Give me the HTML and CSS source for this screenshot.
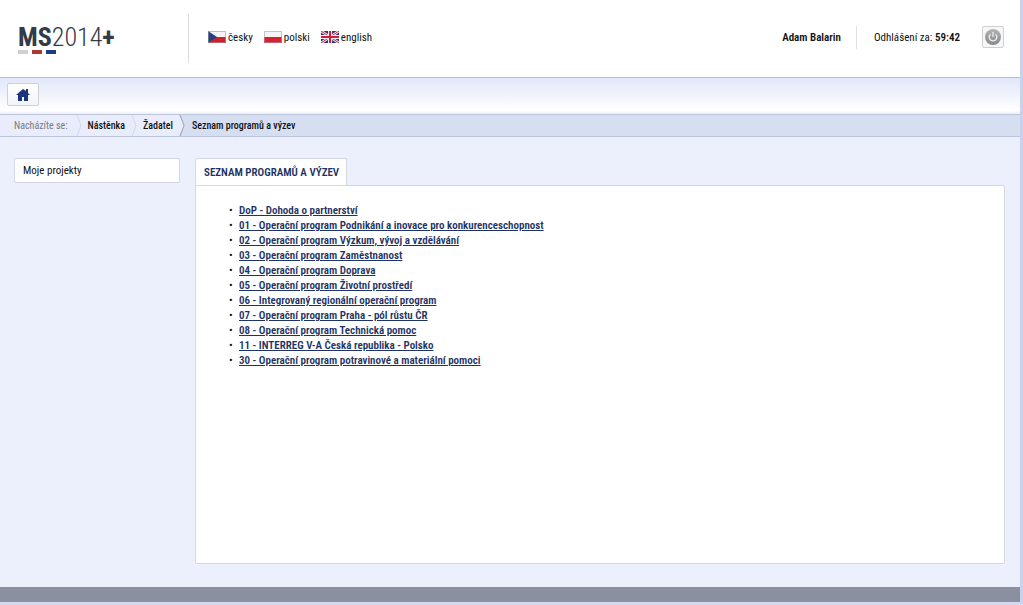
FILE: index.html
```html
<!DOCTYPE html>
<html lang="cs">
<head>
<meta charset="utf-8">
<title>MS2014+</title>
<link rel="stylesheet" href="styles.css">
</head>
<body>
<div class="page">
  <header class="header">
    <div class="brand">
      <div class="logo"><b>MS</b>2014<b>+</b></div>
      <div class="stripes"><span class="stripe"></span><span class="stripe stripe-red"></span><span class="stripe stripe-blue"></span></div>
    </div>
    <nav class="languages">
      <a class="language" href="#cs"><svg class="flag" viewBox="0 0 18 12"><path fill="#f4f4f6" d="M0 0h18v6H0z"/><path fill="#d0202c" d="M0 6h18v6H0z"/><path fill="#24427f" d="M0 0l9 6-9 6z"/><path fill="none" stroke="#9a9aa5" stroke-opacity=".6" d="M.5.5h17v11H.5z"/></svg>česky</a>
      <a class="language" href="#pl"><svg class="flag" viewBox="0 0 18 12"><path fill="#f4f4f6" d="M0 0h18v6H0z"/><path fill="#d9202f" d="M0 6h18v6H0z"/><path fill="none" stroke="#b09aa5" stroke-opacity=".6" d="M.5.5h17v11H.5z"/></svg>polski</a>
      <a class="language" href="#en"><svg class="flag" viewBox="0 0 18 12"><path fill="#283a80" d="M0 0h18v12H0z"/><path stroke="#f2eef4" stroke-width="2.6" d="M0 0l18 12M18 0L0 12"/><path stroke="#cc2740" d="M0 0l18 12M18 0L0 12"/><path stroke="#f2eef4" stroke-width="4" d="M9 0v12M0 6h18"/><path stroke="#cc2036" stroke-width="2" d="M9 0v12M0 6h18"/></svg>english</a>
    </nav>
    <div class="session">
      <b class="user">Adam Balarin</b>
      <span class="timer">Odhlášení za: <b>59:42</b></span>
      <button class="power" type="button" aria-label="Odhlásit"><svg width="18" height="18" viewBox="0 0 18 18"><defs><linearGradient id="knob" x2="0" y2="1"><stop stop-color="#b4b4b4"/><stop offset="1" stop-color="#85888b"/></linearGradient></defs><circle cx="9" cy="9" r="8" fill="url(#knob)"/><path d="M6.5 6.2a3.8 3.8 0 1 0 5 0M9 4v5" fill="none" stroke="#eee" stroke-width="1.3"/></svg></button>
    </div>
  </header>
  <div class="toolbar">
    <a class="home" href="#home" aria-label="Nástěnka"><svg width="14" height="14" viewBox="0 0 14 14"><path fill="#1c3478" d="M7 1L0 7h2v6h4V9h2v4h4V7h2l-2-2V1h-2v2z"/></svg></a>
  </div>
  <nav class="crumbs">
    <span class="crumb crumb-label">Nacházíte se:</span>
    <svg class="chevron" viewBox="0 0 6 21"><path d="M1 0l4 10.500-4 10.500" fill="none" stroke="#d3d8ea"/></svg>
    <a class="crumb" href="#board">Nástěnka</a>
    <svg class="chevron" viewBox="0 0 6 21"><path d="M1 0l4 10.500-4 10.500" fill="none" stroke="#d3d8ea"/></svg>
    <a class="crumb" href="#applicant">Žadatel</a>
    <svg class="chevron chevron-last" viewBox="0 0 6 21"><path d="M0 0h1l4 10.500-4 10.500H0z" fill="#e9edfb"/><path d="M1 0l4 10.500-4 10.500" fill="none" stroke="#959fb6"/></svg>
    <span class="crumb crumb-current">Seznam programů a výzev</span>
  </nav>
  <main class="main">
    <aside class="side"><a class="side-link" href="#projects">Moje projekty</a></aside>
    <section class="content">
      <h1 class="tab">SEZNAM PROGRAMŮ A VÝZEV</h1>
      <div class="panel">
        <ul class="programs">
          <li><a href="#dop">DoP - Dohoda o partnerství</a></li>
          <li><a href="#01">01 - Operační program Podnikání a inovace pro konkurenceschopnost</a></li>
          <li><a href="#02">02 - Operační program Výzkum, vývoj a vzdělávání</a></li>
          <li><a href="#03">03 - Operační program Zaměstnanost</a></li>
          <li><a href="#04">04 - Operační program Doprava</a></li>
          <li><a href="#05">05 - Operační program Životní prostředí</a></li>
          <li><a href="#06">06 - Integrovaný regionální operační program</a></li>
          <li><a href="#07">07 - Operační program Praha - pól růstu ČR</a></li>
          <li><a href="#08">08 - Operační program Technická pomoc</a></li>
          <li><a href="#11">11 - INTERREG V-A Česká republika - Polsko</a></li>
          <li><a href="#30">30 - Operační program potravinové a materiální pomoci</a></li>
        </ul>
      </div>
    </section>
  </main>
  <footer class="footer"></footer>
</div>
</body>
</html>
```
FILE: styles.css
```css
* { box-sizing: border-box; }
body {
  margin: 0;
  background: #c9d2ea;
  color: #111;
  font: 11px/15px "Roboto Condensed", Roboto, sans-serif;
}
a { color: inherit; text-decoration: none; }
b { font-weight: 600; }
svg { display: block; flex: none; }
.page {
  display: flex;
  flex-direction: column;
  min-height: 100vh;
  border-right: 3px solid #c9d2ea;
  border-bottom: 3px solid #d3d9ef;
  background: #ecf0fd;
}
.header {
  display: flex;
  height: 78px;
  padding: 14px 16px 14px 18px;
  border-bottom: 1px solid #b9bdd0;
  background: #fff;
}
.brand {
  width: 171px;
  padding-top: 10px;
  border-right: 1px solid #dcdcdc;
}
.logo { color: #343b48; font-size: 26px; font-weight: 300; line-height: 26px; }
.logo b { font-weight: 700; }
.stripes { display: flex; gap: 4px; }
.stripe { width: 10px; height: 4px; background: #d0d0d0; }
.stripe-red { background: #a83a30; }
.stripe-blue { background: #1e3a8c; }
.languages { display: flex; align-items: center; gap: 11px; height: 46px; margin-left: 19px; }
.language { display: flex; align-items: center; gap: 2px; }
.flag { width: 18px; height: 12px; }
.session { display: flex; align-items: center; height: 46px; margin-left: auto; }
.user { padding-right: 15px; }
.timer { padding: 4px 22px 4px 17px; border-left: 1px solid #e0e0e0; }
.power {
  display: flex;
  align-items: center;
  justify-content: center;
  width: 22px;
  height: 22px;
  padding: 0;
  border: 1px solid #d0d0d0;
  border-radius: 2px;
  background: #f7f7f7;
}
.toolbar {
  height: 36px;
  padding: 5px 7px;
  background: linear-gradient(#e1e7fa, #fff 90%, #eceef8);
}
.home {
  display: flex;
  align-items: center;
  justify-content: center;
  width: 32px;
  height: 23px;
  border: 1px solid #d0d0d4;
  border-radius: 2px;
  background: linear-gradient(#fff, #f3f4f8);
}
.crumbs {
  display: flex;
  height: 23px;
  border-top: 1px solid #bdc5da;
  border-bottom: 1px solid #bdc5da;
  background: #d6def2;
  font-size: 10px;
  font-weight: 500;
  line-height: 22px;
}
.crumb { padding: 0 6px; background: #e9edfb; }
.crumb-label { padding: 0 8px 0 14px; color: #777b88; font-weight: 400; }
.crumb-current { padding-left: 7px; background: none; }
.chevron { width: 6px; height: 21px; background: #e9edfb; }
.chevron-last { background: none; }
.main { display: flex; flex: 1; gap: 15px; padding: 21px 15px 23px 14px; }
.side { width: 166px; }
.side-link {
  display: block;
  padding: 4px 8px;
  border: 1px solid #d5d7e0;
  border-radius: 2px;
  background: #fff;
}
.content { display: flex; flex: 1; flex-direction: column; align-items: flex-start; }
.tab {
  margin: 0;
  padding: 6px 7px 5px 8px;
  border: 1px solid #d5d7e0;
  border-bottom: 0;
  border-radius: 2px 2px 0 0;
  background: #fff;
  color: #1c3364;
  font-size: 11px;
  font-weight: 600;
}
.panel {
  flex: 1;
  width: 100%;
  padding: 17px 33px;
  border: 1px solid #d5d7e0;
  border-radius: 0 2px 2px 2px;
  background: #fff;
}
.programs { margin: 0; padding: 0; list-style: none; }
.programs li { display: flex; }
.programs li::before { content: "•"; width: 10px; }
.programs a { color: #1c3364; font-weight: 600; text-decoration: underline; }
.footer { height: 15px; background: #8a8fa1; }
```
